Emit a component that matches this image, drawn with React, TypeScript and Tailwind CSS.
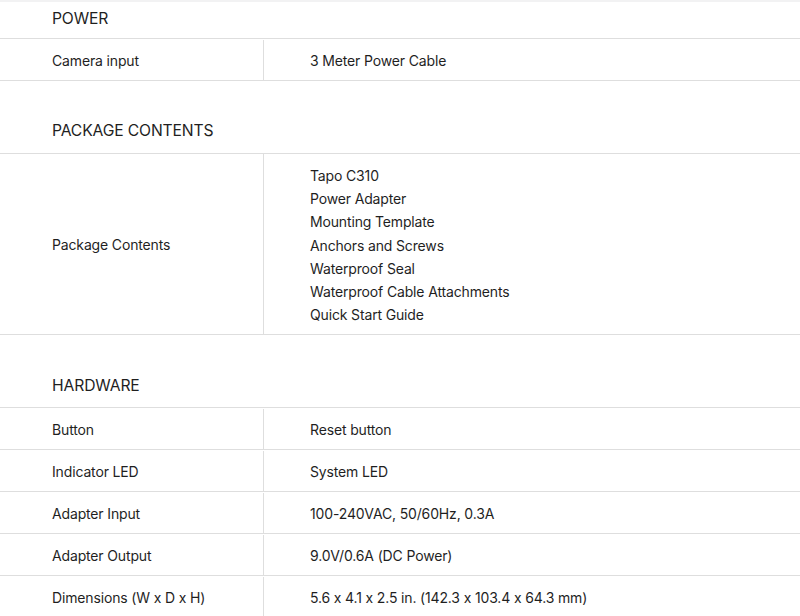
import React from "react";

interface SpecRow {
  label: string;
  value: string[];
}

interface SpecSection {
  title: string;
  rows: SpecRow[];
}

const sections: SpecSection[] = [
  {
    title: "POWER",
    rows: [{ label: "Camera input", value: ["3 Meter Power Cable"] }],
  },
  {
    title: "PACKAGE CONTENTS",
    rows: [
      {
        label: "Package Contents",
        value: [
          "Tapo C310",
          "Power Adapter",
          "Mounting Template",
          "Anchors and Screws",
          "Waterproof Seal",
          "Waterproof Cable Attachments",
          "Quick Start Guide",
        ],
      },
    ],
  },
  {
    title: "HARDWARE",
    rows: [
      { label: "Button", value: ["Reset button"] },
      { label: "Indicator LED", value: ["System LED"] },
      { label: "Adapter Input", value: ["100-240VAC, 50/60Hz, 0.3A"] },
      { label: "Adapter Output", value: ["9.0V/0.6A (DC Power)"] },
      {
        label: "Dimensions (W x D x H)",
        value: ["5.6 x 4.1 x 2.5 in. (142.3 x 103.4 x 64.3 mm)"],
      },
    ],
  },
];

const Row = ({ row }: { row: SpecRow }) => {
  const multi = row.value.length > 1;
  return (
    <div
      className={`flex border-b border-[#dedede] ${multi ? "" : "h-[42px] pt-[1px]"}`}
    >
      <div className="w-[264px] shrink-0 border-r border-[#dedede] pl-[52px] flex items-center">
        {row.label}
      </div>
      <div
        className={`pl-[46px] flex flex-col justify-center ${
          multi ? "pt-[10px] pb-[8px] leading-[23.2px]" : ""
        }`}
      >
        {row.value.map((v) => (
          <div key={v}>{v}</div>
        ))}
      </div>
    </div>
  );
};

export default function App() {
  return (
    <div
      className="w-[800px] h-[616px] overflow-hidden bg-white text-[14px] tracking-[-0.15px] text-[#1f1f1f] [font-feature-settings:'calt'_0]"
      style={{ fontFamily: "Inter, 'Liberation Sans', sans-serif" }}
    >
      <div className="h-[2px] bg-[#f2f2f3]" />
      {sections.map((s, i) => (
        <div key={s.title}>
          <div
            className={`flex items-center pl-[52px] text-[15.7px] pb-[3px] border-b border-[#dedede] ${
              i === 0 ? "h-[37px]" : "h-[73px] pt-[31px]"
            }`}
          >
            {s.title}
          </div>
          {s.rows.map((r) => (
            <Row key={r.label} row={r} />
          ))}
        </div>
      ))}
    </div>
  );
}
